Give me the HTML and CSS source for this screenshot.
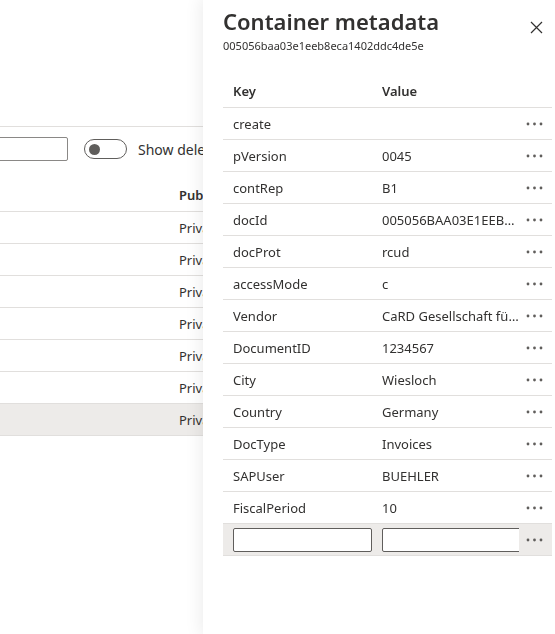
FILE: index.html
```html
<!DOCTYPE html>
<html>
<head>
<meta charset="utf-8">
<link rel="stylesheet" href="styles.css">
</head>
<body>
<div class="page">
  <div class="topbar"></div>
  <div class="filters">
    <div class="search"></div>
    <div class="toggle"><span class="knob"></span></div>
    <span class="toggle-label">Show deleted</span>
  </div>
  <div class="list">
    <div class="list-head"><span class="col-pub">Public access</span></div>
    <div class="list-row"><span class="col-pub">Private</span></div>
    <div class="list-row"><span class="col-pub">Private</span></div>
    <div class="list-row"><span class="col-pub">Private</span></div>
    <div class="list-row"><span class="col-pub">Private</span></div>
    <div class="list-row"><span class="col-pub">Private</span></div>
    <div class="list-row"><span class="col-pub">Private</span></div>
    <div class="list-row selected"><span class="col-pub">Private</span></div>
  </div>
</div>

<aside class="panel">
  <header class="panel-header">
    <div class="titles">
      <h1 class="title">Container metadata</h1>
      <div class="subtitle">005056baa03e1eeb8eca1402ddc4de5e</div>
    </div>
    <button class="close" aria-label="Close">
      <svg width="13" height="13" viewBox="0 0 13 13"><path d="M1 1 L12 12 M12 1 L1 12" stroke="#323130" stroke-width="1.2" fill="none"/></svg>
    </button>
  </header>
  <div class="panel-body">
    <div class="grid">
      <div class="row head"><span class="cell">Key</span><span class="cell">Value</span><span class="cell"></span></div>
      <div class="row"><span class="cell">create</span><span class="cell"></span><span class="cell more"><svg class="dots" width="17" height="4" viewBox="0 0 17 4"><circle cx="2" cy="2" r="1.4"/><circle cx="8.5" cy="2" r="1.4"/><circle cx="15" cy="2" r="1.4"/></svg></span></div>
      <div class="row"><span class="cell">pVersion</span><span class="cell">0045</span><span class="cell more"><svg class="dots" width="17" height="4" viewBox="0 0 17 4"><circle cx="2" cy="2" r="1.4"/><circle cx="8.5" cy="2" r="1.4"/><circle cx="15" cy="2" r="1.4"/></svg></span></div>
      <div class="row"><span class="cell">contRep</span><span class="cell">B1</span><span class="cell more"><svg class="dots" width="17" height="4" viewBox="0 0 17 4"><circle cx="2" cy="2" r="1.4"/><circle cx="8.5" cy="2" r="1.4"/><circle cx="15" cy="2" r="1.4"/></svg></span></div>
      <div class="row"><span class="cell">docId</span><span class="cell">005056BAA03E1EEB8ECA1402DDC4DE5E</span><span class="cell more"><svg class="dots" width="17" height="4" viewBox="0 0 17 4"><circle cx="2" cy="2" r="1.4"/><circle cx="8.5" cy="2" r="1.4"/><circle cx="15" cy="2" r="1.4"/></svg></span></div>
      <div class="row"><span class="cell">docProt</span><span class="cell">rcud</span><span class="cell more"><svg class="dots" width="17" height="4" viewBox="0 0 17 4"><circle cx="2" cy="2" r="1.4"/><circle cx="8.5" cy="2" r="1.4"/><circle cx="15" cy="2" r="1.4"/></svg></span></div>
      <div class="row"><span class="cell">accessMode</span><span class="cell">c</span><span class="cell more"><svg class="dots" width="17" height="4" viewBox="0 0 17 4"><circle cx="2" cy="2" r="1.4"/><circle cx="8.5" cy="2" r="1.4"/><circle cx="15" cy="2" r="1.4"/></svg></span></div>
      <div class="row"><span class="cell">Vendor</span><span class="cell">CaRD Gesellschaft für Datenverarbeitung mbH</span><span class="cell more"><svg class="dots" width="17" height="4" viewBox="0 0 17 4"><circle cx="2" cy="2" r="1.4"/><circle cx="8.5" cy="2" r="1.4"/><circle cx="15" cy="2" r="1.4"/></svg></span></div>
      <div class="row"><span class="cell">DocumentID</span><span class="cell">1234567</span><span class="cell more"><svg class="dots" width="17" height="4" viewBox="0 0 17 4"><circle cx="2" cy="2" r="1.4"/><circle cx="8.5" cy="2" r="1.4"/><circle cx="15" cy="2" r="1.4"/></svg></span></div>
      <div class="row"><span class="cell">City</span><span class="cell">Wiesloch</span><span class="cell more"><svg class="dots" width="17" height="4" viewBox="0 0 17 4"><circle cx="2" cy="2" r="1.4"/><circle cx="8.5" cy="2" r="1.4"/><circle cx="15" cy="2" r="1.4"/></svg></span></div>
      <div class="row"><span class="cell">Country</span><span class="cell">Germany</span><span class="cell more"><svg class="dots" width="17" height="4" viewBox="0 0 17 4"><circle cx="2" cy="2" r="1.4"/><circle cx="8.5" cy="2" r="1.4"/><circle cx="15" cy="2" r="1.4"/></svg></span></div>
      <div class="row"><span class="cell">DocType</span><span class="cell">Invoices</span><span class="cell more"><svg class="dots" width="17" height="4" viewBox="0 0 17 4"><circle cx="2" cy="2" r="1.4"/><circle cx="8.5" cy="2" r="1.4"/><circle cx="15" cy="2" r="1.4"/></svg></span></div>
      <div class="row"><span class="cell">SAPUser</span><span class="cell">BUEHLER</span><span class="cell more"><svg class="dots" width="17" height="4" viewBox="0 0 17 4"><circle cx="2" cy="2" r="1.4"/><circle cx="8.5" cy="2" r="1.4"/><circle cx="15" cy="2" r="1.4"/></svg></span></div>
      <div class="row"><span class="cell">FiscalPeriod</span><span class="cell">10</span><span class="cell more"><svg class="dots" width="17" height="4" viewBox="0 0 17 4"><circle cx="2" cy="2" r="1.4"/><circle cx="8.5" cy="2" r="1.4"/><circle cx="15" cy="2" r="1.4"/></svg></span></div>
      <div class="row new"><span class="cell"><input class="field" type="text"></span><span class="cell"><input class="field" type="text"></span><span class="cell more"><svg class="dots" width="17" height="4" viewBox="0 0 17 4"><circle cx="2" cy="2" r="1.4"/><circle cx="8.5" cy="2" r="1.4"/><circle cx="15" cy="2" r="1.4"/></svg></span></div>
    </div>
  </div>
</aside>
</body>
</html>
```

FILE: styles.css
```css
html, body {
  margin: 0;
  padding: 0;
  background: #fff;
  font-family: "Segoe UI", "Noto Sans", "Open Sans", sans-serif;
  font-size: 13px;
  color: #323130;
  overflow: hidden;
}

.page {
  width: 203px;
  height: 634px;
  overflow: hidden;
}

.topbar {
  height: 126px;
  border-bottom: 1px solid #e1dfdd;
}

.filters {
  display: flex;
  align-items: center;
  height: 24px;
  margin-top: 10px;
}

.search {
  flex: none;
  width: 88px;
  height: 24px;
  margin-left: -20px;
  border: 1px solid #8a8886;
  border-radius: 2px;
  box-sizing: border-box;
}

.toggle {
  flex: none;
  width: 43px;
  height: 20px;
  box-sizing: border-box;
  margin-left: 16px;
  border: 1px solid #605e5c;
  border-radius: 10px;
  display: flex;
  align-items: center;
  padding-left: 4px;
}

.knob {
  width: 11px;
  height: 11px;
  border-radius: 50%;
  background: #605e5c;
}

.toggle-label {
  flex: none;
  margin-left: 11px;
  white-space: nowrap;
  font-size: 14px;
}

.list {
  margin-top: 10px;
}

.list-head {
  height: 32px;
  padding-top: 8px;
  border-bottom: 1px solid #e1dfdd;
  display: flex;
  align-items: center;
  font-weight: 600;
}

.list-row {
  height: 31px;
  border-bottom: 1px solid #e1dfdd;
  display: flex;
  align-items: center;
}

.list-row.selected {
  background: #edebe9;
}

.col-pub {
  flex: none;
  margin-left: 179px;
  white-space: nowrap;
}

.panel {
  position: fixed;
  top: 0;
  right: 0;
  bottom: 0;
  width: 352px;
  background: #fff;
  box-shadow: rgba(0, 0, 0, 0.08) 0 0 16px 2px;
  display: flex;
  flex-direction: column;
}

.panel-header {
  display: flex;
  justify-content: space-between;
  align-items: flex-start;
  padding: 5px 0 0 20px;
}

.title {
  margin: 0;
  font-size: 22px;
  font-weight: 600;
  line-height: 32px;
  color: #323130;
}

.subtitle {
  font-size: 11px;
  line-height: 16px;
  margin-top: 1px;
}

.close {
  border: 0;
  background: transparent;
  padding: 0;
  width: 32px;
  height: 32px;
  margin: 6px 3px 0 0;
  display: flex;
  align-items: center;
  justify-content: center;
}

.panel-body {
  padding: 21px 3px 0 20px;
}

.grid {
  display: flex;
  flex-direction: column;
}

.row {
  display: grid;
  grid-template-columns: 149px 147px 33px;
  height: 31px;
  border-bottom: 1px solid #e1dfdd;
  align-items: center;
}

.row.head {
  font-weight: 600;
  height: 32px;
}

.row.new {
  background: #edebe9;
}

.cell {
  padding-left: 10px;
  white-space: nowrap;
  overflow: hidden;
  text-overflow: ellipsis;
}

.cell.more {
  padding-left: 7px;
  display: flex;
  justify-content: flex-start;
}

.dots {
  fill: #605e5c;
  display: block;
}

.field {
  display: block;
  box-sizing: border-box;
  width: 139px;
  height: 24px;
  border: 1px solid #605e5c;
  border-radius: 2px;
  background: #fff;
  margin: 0;
}
```
